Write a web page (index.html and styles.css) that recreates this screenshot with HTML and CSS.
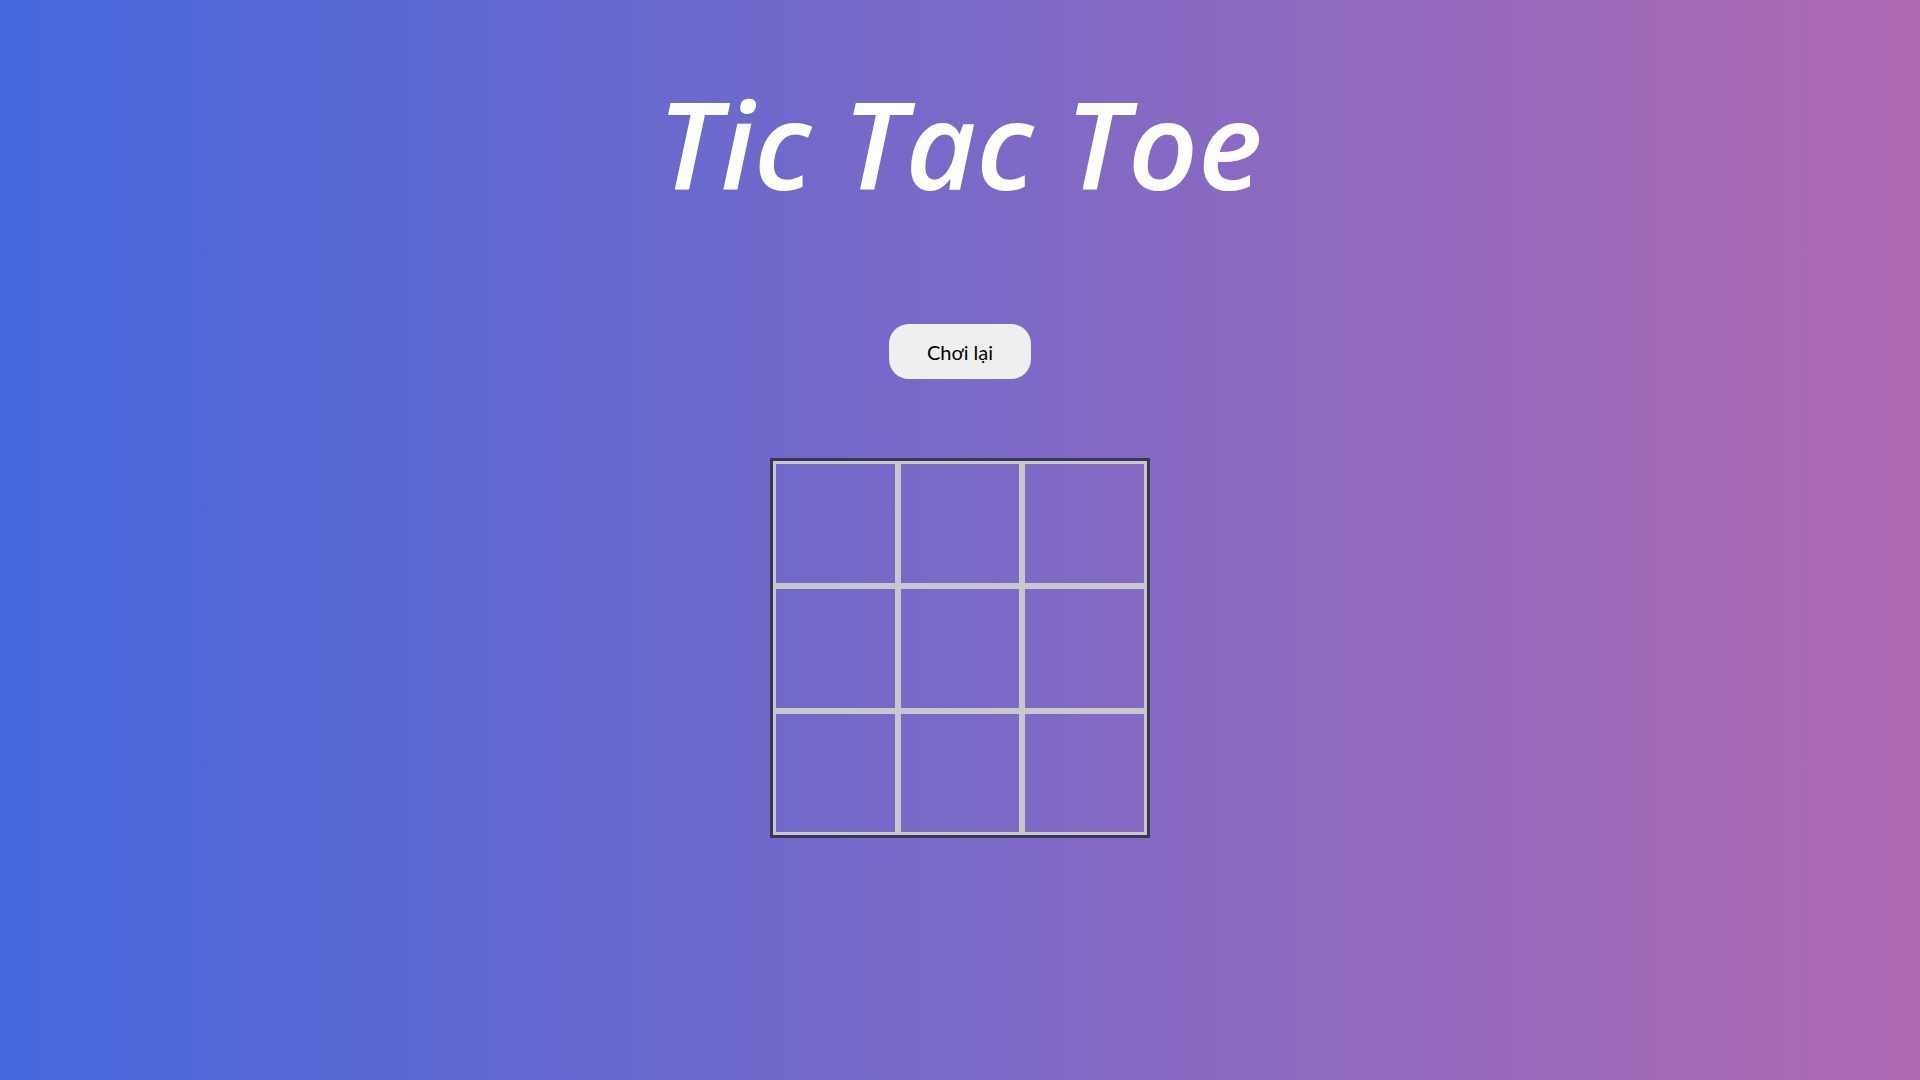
FILE: index.html
```html
<!DOCTYPE html>
<html lang="vi">
<head>
<meta charset="utf-8">
<title>Tic Tac Toe</title>
<link rel="stylesheet" href="styles.css">
</head>
<body>
<main class="game">
  <h1 class="title">Tic Tac Toe</h1>
  <button class="restart" type="button">Chơi lại</button>
  <div class="board">
    <div class="cell"></div><div class="cell"></div><div class="cell"></div>
    <div class="cell"></div><div class="cell"></div><div class="cell"></div>
    <div class="cell"></div><div class="cell"></div><div class="cell"></div>
  </div>
</main>
</body>
</html>
```
FILE: styles.css
```css
html, body {
  margin: 0;
  padding: 0;
  height: 100%;
}
body {
  background: linear-gradient(to right, #4568dc, #b06ab3);
  font-family: "Open Sans", "Noto Sans", sans-serif;
  overflow: hidden;
}
.game {
  display: flex;
  flex-direction: column;
  align-items: center;
}
.title {
  margin: 70px 0 0;
  font-size: 122px;
  line-height: 1.2;
  font-style: italic;
  font-weight: 600;
  color: #ffffff;
  letter-spacing: 0;
}
.restart {
  margin-top: 108px;
  padding: 0 38px;
  height: 55px;
  border: none;
  border-radius: 20px;
  background: #efefef;
  color: #000;
  font-family: "Lato", "Open Sans", sans-serif;
  font-size: 20px;
  cursor: pointer;
}
.board {
  margin-top: 79px;
  width: 374px;
  height: 374px;
  border: 3px solid #3a3850;
  display: grid;
  grid-template-columns: repeat(3, 1fr);
  grid-template-rows: repeat(3, 1fr);
}
.cell {
  border: 3px solid #c8c8cc;
}
```
